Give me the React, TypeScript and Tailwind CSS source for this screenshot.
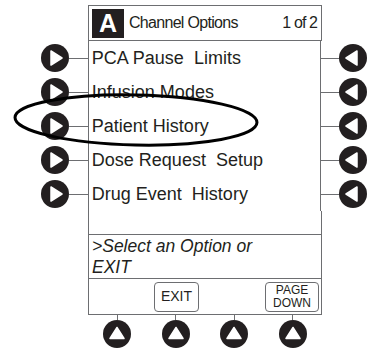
import React from 'react';

type Dir = 'left' | 'right' | 'up';

// black round key with a white arrow triangle
const Key: React.FC<{ dir: Dir }> = ({ dir }) => {
  const tri =
    dir === 'right'
      ? '10,7 21,14 10,21'
      : dir === 'left'
      ? '18,7 7,14 18,21'
      : '7,18.5 14,7.5 21,18.5';
  return (
    <svg width="28" height="28" viewBox="0 0 28 28" className="shrink-0">
      <circle cx="14" cy="14" r="14" fill="#231f20" />
      <polygon points={tri} fill="#fff" stroke="#fff" strokeWidth="1.5" strokeLinejoin="round" />
    </svg>
  );
};

const options = [
  'PCA Pause  Limits',
  'Infusion Modes',
  'Patient History',
  'Dose Request  Setup',
  'Drug Event  History',
];

const App: React.FC = () => {
  return (
    <div
      className="relative w-[367px] h-[354px] bg-white pt-[5px] text-[#231f20]"
      style={{ fontFamily: '"Liberation Sans", Arial, sans-serif' }}
    >
      {/* header */}
      <div className="flex">
        <div className="w-[88px]" />
        <div className="w-[234px] h-[36px] border border-[#6d6e71] flex items-center pl-[3px] pr-[4px]">
          <div className="w-[32px] h-[29px] bg-[#231f20] text-white flex items-center justify-center text-[25px] font-bold leading-none">
            A
          </div>
          <span className="ml-[5px] text-[16px] tracking-[-0.7px]">Channel Options</span>
          <span className="ml-auto text-[16px] tracking-[-0.9px]">1 of 2</span>
        </div>
      </div>

      {/* option rows */}
      {options.map((label) => (
        <div key={label} className="flex h-[34px]">
          <div className="w-[88px] flex items-center pl-[41px]">
            <Key dir="right" />
            <div className="flex-1 h-px bg-[#6d6e71]" />
          </div>
          <div className="w-[234px] border-x border-[#6d6e71] flex items-center pl-[3px] text-[18px] whitespace-pre">
            {label}
          </div>
          <div className="flex-1 flex items-center">
            <div className="w-[18px] h-px bg-[#6d6e71]" />
            <Key dir="left" />
          </div>
        </div>
      ))}

      {/* empty space + prompt + soft keys */}
      <div className="flex">
        <div className="w-[88px]" />
        <div className="w-[234px] border-x border-b border-[#6d6e71]">
          <div className="h-[23px]" />
          <div className="border-t border-[#6d6e71] h-[44px] pl-[3px] pt-[1px] text-[17.5px] italic leading-[21px]">
            &gt;Select an Option or
            <br />
            EXIT
          </div>
          <div className="border-t border-[#6d6e71] h-[36px] grid grid-cols-4 items-center px-[2px]">
            <div />
            <div className="flex justify-center">
              <div className="w-[45px] h-[30px] border border-[#6d6e71] rounded-[4px] flex items-center justify-center text-[14px]">
                EXIT
              </div>
            </div>
            <div />
            <div className="flex justify-end">
              <div className="w-[54px] h-[30px] border border-[#6d6e71] rounded-[4px] flex flex-col items-center justify-center text-[12px] leading-[13px]">
                <span>PAGE</span>
                <span>DOWN</span>
              </div>
            </div>
          </div>
        </div>
      </div>

      {/* bottom keys */}
      <div className="flex">
        <div className="w-[88px]" />
        <div className="w-[234px] grid grid-cols-4">
          {[0, 1, 2, 3].map((i) => (
            <div key={i} className="flex flex-col items-center">
              <div className="w-px h-[5px] bg-[#6d6e71]" />
              <Key dir="up" />
            </div>
          ))}
        </div>
      </div>

      {/* callout ellipse around Patient History */}
      <svg className="absolute left-[12px] top-[92px]" width="250" height="56" viewBox="0 0 250 56">
        <ellipse
          cx="124"
          cy="28"
          rx="121"
          ry="25"
          fill="none"
          stroke="#000"
          strokeWidth="3"
          transform="rotate(1.2 124 28)"
        />
      </svg>
    </div>
  );
};

export default App;
